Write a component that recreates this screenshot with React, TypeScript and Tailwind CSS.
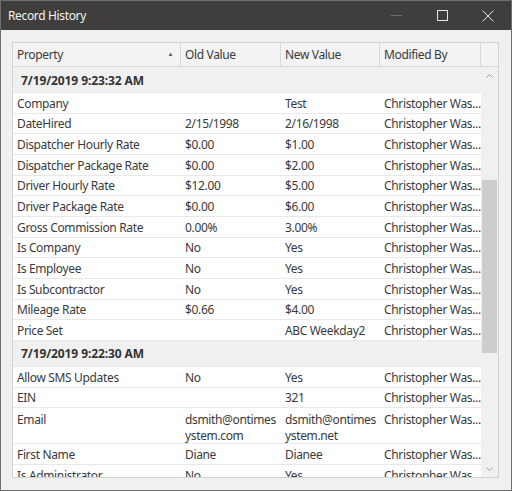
import React from "react";

type Row = { prop: string; old?: React.ReactNode; neu?: React.ReactNode; h?: string };

const GROUPS: { stamp: string; rows: Row[] }[] = [
  {
    stamp: "7/19/2019 9:23:32 AM",
    rows: [
      { prop: "Company", neu: "Test" },
      { prop: "DateHired", old: "2/15/1998", neu: "2/16/1998" },
      { prop: "Dispatcher Hourly Rate", old: "$0.00", neu: "$1.00" },
      { prop: "Dispatcher Package Rate", old: "$0.00", neu: "$2.00" },
      { prop: "Driver Hourly Rate", old: "$12.00", neu: "$5.00" },
      { prop: "Driver Package Rate", old: "$0.00", neu: "$6.00" },
      { prop: "Gross Commission Rate", old: "0.00%", neu: "3.00%" },
      { prop: "Is Company", old: "No", neu: "Yes" },
      { prop: "Is Employee", old: "No", neu: "Yes" },
      { prop: "Is Subcontractor", old: "No", neu: "Yes" },
      { prop: "Mileage Rate", old: "$0.66", neu: "$4.00" },
      { prop: "Price Set", neu: "ABC Weekday2" },
    ],
  },
  {
    stamp: "7/19/2019 9:22:30 AM",
    rows: [
      { prop: "Allow SMS Updates", old: "No", neu: "Yes" },
      { prop: "EIN", neu: "321" },
      {
        prop: "Email",
        old: (
          <>
            dsmith@ontimes
            <br />
            ystem.com
          </>
        ),
        neu: (
          <>
            dsmith@ontimes
            <br />
            ystem.net
          </>
        ),
        h: "tall",
      },
      { prop: "First Name", old: "Diane", neu: "Dianee" },
      { prop: "Is Administrator", old: "No", neu: "Yes" },
    ],
  },
];

function DataRow({ row }: { row: Row }) {
  const tall = row.h === "tall";
  return (
    <div
      className={
        "flex border-b border-[#e8e8e8] bg-white leading-[16px] " +
        (tall ? "h-[36px] pt-[4px]" : "h-[20.67px] items-center pt-[2px]")
      }
    >
      <div className="w-[168px] shrink-0 pl-[4px] whitespace-nowrap">{row.prop}</div>
      <div className="w-[100px] shrink-0 pl-[4px]">{row.old}</div>
      <div className="w-[99px] shrink-0 pl-[4px]">{row.neu}</div>
      <div className="w-[101px] shrink-0 pl-[4px] whitespace-nowrap">Christopher Was...</div>
    </div>
  );
}

function Chevron({ up }: { up?: boolean }) {
  return (
    <svg width="7" height="4" viewBox="0 0 7 4" className="text-[#9a9a9a]">
      <path
        d={up ? "M0.5 3.5 L3.5 0.5 L6.5 3.5" : "M0.5 0.5 L3.5 3.5 L6.5 0.5"}
        fill="none"
        stroke="currentColor"
        strokeWidth="1"
      />
    </svg>
  );
}

export default function App() {
  return (
    <div
      className="w-[512px] h-[491px] flex flex-col border border-[#6f6f6f] bg-[#f0f0f0] text-[12px] tracking-[-0.35px] text-[#3a3a3a] overflow-hidden"
      style={{ fontFamily: '"Noto Sans", "Open Sans", sans-serif' }}
    >
      <div className="h-[29px] shrink-0 flex items-center bg-[#403e3c] text-[#f2f2f2]">
        <div className="pl-[7px] pt-[1px] text-[12px] flex-1">Record History</div>
        <div className="w-[46px] h-full flex items-center justify-center">
          <div className="w-[11px] h-px bg-[#6e6c6a]" />
        </div>
        <div className="w-[46px] h-full flex items-center justify-center">
          <div className="w-[11px] h-[11px] border border-[#e6e6e6]" />
        </div>
        <div className="w-[46px] h-full flex items-center justify-center">
          <svg width="12" height="12" viewBox="0 0 12 12">
            <path d="M0.5 0.5 L11.5 11.5 M11.5 0.5 L0.5 11.5" stroke="#e6e6e6" strokeWidth="1" />
          </svg>
        </div>
      </div>

      <div className="flex-1 pl-[11px] pr-[12px] pt-[12px]">
        <div className="h-[436px] flex flex-col border border-[#d2d2d2] bg-[#f0f0f0]">
          <div className="h-[24px] shrink-0 flex border-b border-[#d9d9d9] bg-[#f3f3f3]">
            <div className="w-[168px] shrink-0 flex items-center justify-between pl-[4px] pr-[7px] border-r border-[#d9d9d9]">
              <span>Property</span>
              <span className="text-[6px] text-[#555]">▲</span>
            </div>
            <div className="w-[100px] shrink-0 flex items-center pl-[4px] border-r border-[#d9d9d9]">Old Value</div>
            <div className="w-[99px] shrink-0 flex items-center pl-[4px] border-r border-[#d9d9d9]">New Value</div>
            <div className="w-[101px] shrink-0 flex items-center pl-[4px] border-r border-[#d9d9d9]">Modified By</div>
            <div className="flex-1" />
          </div>
          <div className="flex-1 flex min-h-0">
            <div className="w-[468px] shrink-0 overflow-hidden">
              {GROUPS.map((g) => (
                <div key={g.stamp}>
                  <div className="h-[26px] flex items-center pl-[8px] pt-[2px] font-bold text-[12px] tracking-[-0.1px] text-[#333] bg-[#f0f0f0] border-b border-[#e8e8e8]">
                    {g.stamp}
                  </div>
                  {g.rows.map((r) => (
                    <DataRow key={r.prop} row={r} />
                  ))}
                </div>
              ))}
            </div>
            <div className="w-[17px] flex flex-col bg-[#f0f0f0]">
              <div className="h-[17px] flex items-center justify-center">
                <Chevron up />
              </div>
              <div className="flex-1 pt-[96px] pb-[107px]">
                <div className="h-full mx-[1px] bg-[#cdcdcd]" />
              </div>
              <div className="h-[17px] flex items-center justify-center">
                <Chevron />
              </div>
            </div>
          </div>
        </div>
      </div>
    </div>
  );
}
